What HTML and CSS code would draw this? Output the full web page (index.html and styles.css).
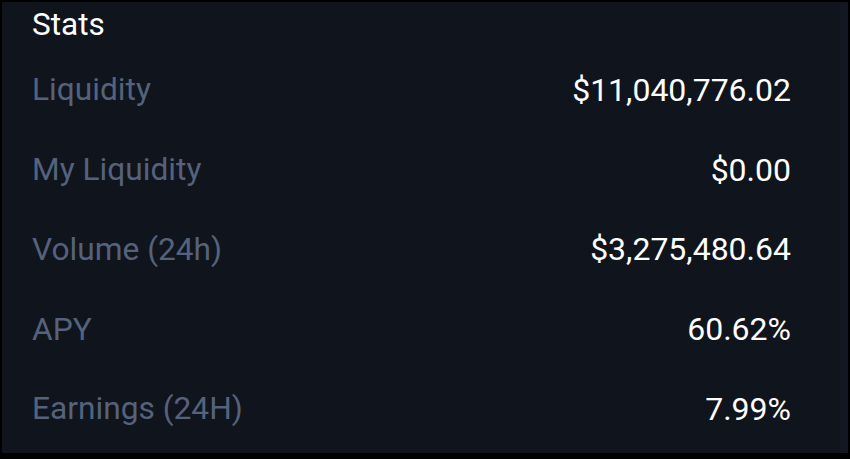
FILE: index.html
```html
<!DOCTYPE html>
<html>
<head>
<meta charset="utf-8">
<link rel="stylesheet" href="styles.css">
</head>
<body>
<div class="panel">
  <div class="title">Stats</div>
  <div class="rows">
    <div class="row"><span class="label">Liquidity</span><span class="value">$11,040,776.02</span></div>
    <div class="row"><span class="label">My Liquidity</span><span class="value">$0.00</span></div>
    <div class="row"><span class="label">Volume (24h)</span><span class="value">$3,275,480.64</span></div>
    <div class="row"><span class="label">APY</span><span class="value">60.62%</span></div>
    <div class="row"><span class="label">Earnings (24H)</span><span class="value">7.99%</span></div>
  </div>
</div>
</body>
</html>
```
FILE: styles.css
```css
html, body {
  margin: 0;
  padding: 0;
  background: #000;
  height: 459px;
  overflow: hidden;
}
body {
  padding: 2px 2px 0 2px;
  box-sizing: border-box;
  font-family: Roboto, "Noto Sans", sans-serif;
}
.panel {
  height: 451px;
  background: #0f141d;
  padding: 0 49px 0 30px;
  box-sizing: border-box;
  border-right: 8px solid #121722;
}
.title {
  color: #fff;
  font-size: 31.5px;
  line-height: 44px;
  padding-top: 1px;
}
.rows {
  display: flex;
  flex-direction: column;
}
.row {
  display: flex;
  justify-content: space-between;
  align-items: center;
  height: 79.75px;
  font-size: 32px;
}
.row:first-child { margin-top: 3px; }
.label { color: #56627c; font-size: 31.7px; }
.value { color: #fff; }
```
